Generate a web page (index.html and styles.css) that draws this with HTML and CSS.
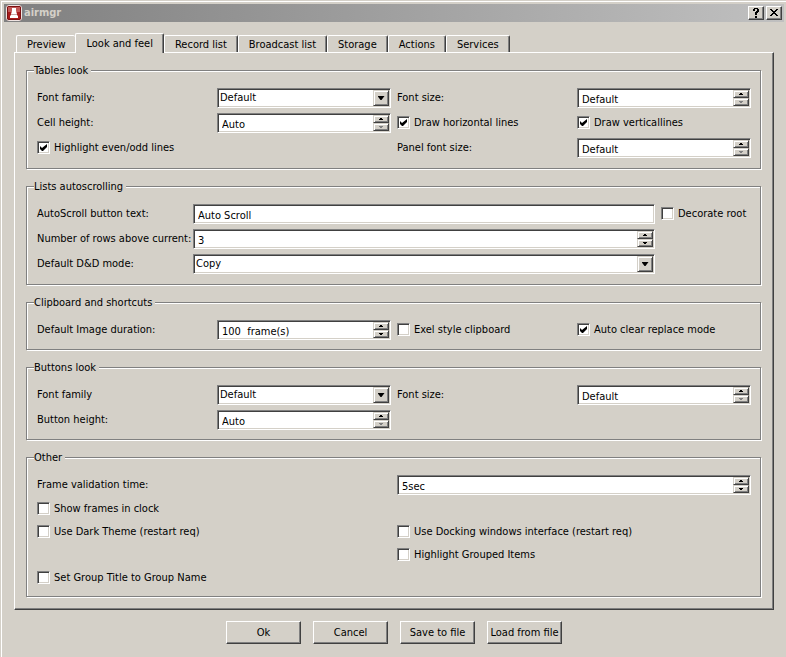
FILE: index.html
```html
<!DOCTYPE html>
<html lang="en">

<head>
    <meta charset="utf-8">
    <title>airmgr</title>
    <link rel="stylesheet" href="styles.css">
</head>

<body>
    <div class="window">
        <header class="titlebar">
            <svg class="app-icon" width="16" height="16" viewBox="0 0 16 16">
                <rect x="0.5" y="0.5" width="15" height="15" rx="2.5" fill="#a81c1c" stroke="#efe4e2"/>
                <rect x="1.5" y="1.5" width="13" height="13" rx="1.5" fill="none" stroke="#7c1010"/>
                <rect x="2" y="2" width="12" height="5" fill="#c25a58"/>
                <path d="M6 3h4v3l1 3v1l1 1v2H4v-2l1-1V9l1-3z" fill="#fff"/>
                <path d="M5 9.500h6" stroke="#c9a9a8"/>
            </svg>
            <h1>airmgr</h1>
            <button type="button" class="title-button" aria-label="Help">
                <svg width="8" height="10" viewBox="0 0 8 10"><path d="M1 1h1V0h4v1h1v3H6v1H5v2H3V4h1V3h1V1H3v2H1zM3 8h2v2H3z"/></svg>
            </button>
            <button type="button" class="title-button" aria-label="Close">
                <svg width="8" height="8" viewBox="0 0 8 8"><path d="M0 0h2v1h1v1h2V1h1V0h2v1H7v1H6v1H5v1h1v1h1v1h1v1H6V6H5V5H3v1H2v1H0V6h1V5h1V4h1V3H2V2H1V1H0z"/></svg>
            </button>
        </header>

        <main>
            <div class="tabs" role="tablist">
                <button type="button" role="tab">Preview</button>
                <button type="button" role="tab" class="active" aria-selected="true">Look and feel</button>
                <button type="button" role="tab">Record list</button>
                <button type="button" role="tab">Broadcast list</button>
                <button type="button" role="tab">Storage</button>
                <button type="button" role="tab">Actions</button>
                <button type="button" role="tab">Services</button>
            </div>

            <form class="pane" id="settings">
                <fieldset class="tall">
                    <legend>Tables look</legend>
                    <div class="grid four">
                        <label for="table-font">Font family:</label>
                        <div class="combo">
                            <select id="table-font"><option>Default</option></select>
                            <span class="arrow"></span>
                        </div>
                        <label for="table-size">Font size:</label>
                        <div class="spin">
                            <input type="text" id="table-size" value="Default">
                            <button type="button" class="up" aria-label="Up"></button>
                            <button type="button" class="down" aria-label="Down" disabled></button>
                        </div>
                        <label for="cell-height">Cell height:</label>
                        <div class="spin">
                            <input type="text" id="cell-height" value="Auto">
                            <button type="button" class="up" aria-label="Up"></button>
                            <button type="button" class="down" aria-label="Down" disabled></button>
                        </div>
                        <label class="check"><input type="checkbox" checked>Draw horizontal lines</label>
                        <label class="check"><input type="checkbox" checked>Draw verticallines</label>
                        <label class="check wide"><input type="checkbox" checked>Highlight even/odd lines</label>
                        <label for="panel-size">Panel font size:</label>
                        <div class="spin">
                            <input type="text" id="panel-size" value="Default">
                            <button type="button" class="up" aria-label="Up"></button>
                            <button type="button" class="down" aria-label="Down" disabled></button>
                        </div>
                    </div>
                </fieldset>

                <fieldset class="tall">
                    <legend>Lists autoscrolling</legend>
                    <div class="grid lists">
                        <label for="scroll-text">AutoScroll button text:</label>
                        <div class="edit"><input type="text" id="scroll-text" value="Auto Scroll"></div>
                        <label class="check"><input type="checkbox">Decorate root</label>
                        <label for="rows-above">Number of rows above current:</label>
                        <div class="spin">
                            <input type="text" id="rows-above" value="3">
                            <button type="button" class="up" aria-label="Up"></button>
                            <button type="button" class="down" aria-label="Down"></button>
                        </div>
                        <label class="first" for="dd-mode">Default D&amp;D mode:</label>
                        <div class="combo">
                            <select id="dd-mode"><option>Copy</option></select>
                            <span class="arrow"></span>
                        </div>
                    </div>
                </fieldset>

                <fieldset>
                    <legend>Clipboard and shortcuts</legend>
                    <div class="grid four">
                        <label for="duration">Default Image duration:</label>
                        <div class="spin">
                            <input type="text" id="duration" value="100  frame(s)">
                            <button type="button" class="up" aria-label="Up"></button>
                            <button type="button" class="down" aria-label="Down"></button>
                        </div>
                        <label class="check"><input type="checkbox">Exel style clipboard</label>
                        <label class="check"><input type="checkbox" checked>Auto clear replace mode</label>
                    </div>
                </fieldset>

                <fieldset>
                    <legend>Buttons look</legend>
                    <div class="grid four">
                        <label for="button-font">Font family</label>
                        <div class="combo">
                            <select id="button-font"><option>Default</option></select>
                            <span class="arrow"></span>
                        </div>
                        <label for="button-size">Font size:</label>
                        <div class="spin">
                            <input type="text" id="button-size" value="Default">
                            <button type="button" class="up" aria-label="Up"></button>
                            <button type="button" class="down" aria-label="Down" disabled></button>
                        </div>
                        <label for="button-height">Button height:</label>
                        <div class="spin">
                            <input type="text" id="button-height" value="Auto">
                            <button type="button" class="up" aria-label="Up"></button>
                            <button type="button" class="down" aria-label="Down" disabled></button>
                        </div>
                    </div>
                </fieldset>

                <fieldset>
                    <legend>Other</legend>
                    <div class="grid two">
                        <label for="validation">Frame validation time:</label>
                        <div class="spin">
                            <input type="text" id="validation" value="5sec">
                            <button type="button" class="up" aria-label="Up"></button>
                            <button type="button" class="down" aria-label="Down"></button>
                        </div>
                        <label class="check wide"><input type="checkbox">Show frames in clock</label>
                        <label class="check"><input type="checkbox">Use Dark Theme (restart req)</label>
                        <label class="check"><input type="checkbox">Use Docking windows interface (restart req)</label>
                        <label class="check second"><input type="checkbox">Highlight Grouped Items</label>
                        <label class="check wide"><input type="checkbox">Set Group Title to Group Name</label>
                    </div>
                </fieldset>
            </form>

            <footer class="actions">
                <button type="submit" form="settings">Ok</button>
                <button type="button">Cancel</button>
                <button type="button">Save to file</button>
                <button type="button">Load from file</button>
            </footer>
        </main>
    </div>
</body>

</html>
```
FILE: styles.css
```css
* {
    box-sizing: border-box;
}

body {
    margin: 0;
    background-color: #d4d0c8;
}

body,
button,
input,
select {
    font-family: Tahoma, "DejaVu Sans Condensed", sans-serif;
    font-size: 11px;
    line-height: 14px;
    color: #000;
}

button {
    padding: 0;
    background-color: #d4d0c8;
}

.window {
    min-height: calc(100vh - 1px);
    margin: 1px 0 0 1px;
    padding: 2px;
    border-top: 1px solid #fff;
    border-left: 1px solid #fff;
}

/* title bar */
.titlebar {
    display: flex;
    align-items: center;
    gap: 2px;
    height: 18px;
    padding: 0 2px;
    background: linear-gradient(to right, #808080, #c0c0c0);
}

.titlebar h1 {
    flex: 1;
    margin: 0;
    font-size: 11px;
    color: #d4d0c8;
}

.title-button {
    display: flex;
    justify-content: center;
    align-items: center;
    width: 16px;
    height: 14px;
    border: 1px solid;
    border-color: #fff #404040 #404040 #fff;
    box-shadow: inset -1px -1px #808080;
}

main {
    padding: 11px 10px 12px;
}

/* tabs */
.tabs {
    display: flex;
    align-items: flex-end;
    padding-left: 2px;
}

.tabs button {
    height: 17px;
    padding: 2px 10px 0;
    border: 0 solid #404040;
    border-top: 1px solid #fff;
    border-left: 1px solid #fff;
    border-right-width: 1px;
    border-radius: 2px 2px 0 0;
    box-shadow: inset -1px 0 #808080;
}

.tabs button.active {
    position: relative;
    height: 20px;
    padding: 0 10px;
    margin-bottom: -1px;
}

.tabs button:first-child {
    border-right: 0;
    box-shadow: none;
}

.pane {
    padding: 11px 11px 12px;
    border: 1px solid;
    border-color: #fff #404040 #404040 #fff;
    box-shadow: inset -1px -1px #808080;
}

/* groups */
fieldset {
    min-width: 0;
    margin: 0 1px 11px 0;
    padding: 11px 9px 9px 10px;
    border: 1px solid #808080;
    box-shadow: 1px 1px #fff, inset 1px 1px #fff;
}

fieldset.tall {
    padding-bottom: 10px;
}

fieldset:last-child {
    margin-bottom: 0;
}

legend {
    margin-left: -3px;
    padding: 0 3px 0 0;
    line-height: 13px;
    background-color: #d4d0c8;
}

.grid {
    display: grid;
    align-items: center;
    gap: 5px 6px;
    grid-auto-rows: 20px;
}

.four {
    grid-template-columns: repeat(4, 1fr);
}

.lists {
    grid-template-columns: 150px 1fr 90px;
}

.two {
    grid-template-columns: 1fr 1fr;
    grid-template-rows: 20px;
    grid-auto-rows: 18px;
}

.wide {
    grid-column: span 2;
}

.first {
    grid-column: 1;
}

.second {
    grid-column: 2;
}

label {
    white-space: nowrap;
}

/* check boxes */
.check {
    display: flex;
    align-items: flex-start;
    gap: 4px;
}

.check input {
    appearance: none;
    width: 13px;
    height: 13px;
    margin: 0;
    padding: 2px;
    border: 1px solid;
    border-color: #808080 #fff #fff #808080;
    background-color: #fff;
    box-shadow: inset 1px 1px #404040, inset -1px -1px #d4d0c8;
}

.check input:checked::before {
    content: "";
    display: block;
    width: 7px;
    height: 7px;
    background-color: #000;
    clip-path: polygon(0 2px, 2px 4px, 7px 0, 7px 3px, 3px 7px, 2px 7px, 0 5px);
}

/* sunken fields */
.edit,
.combo,
.spin {
    height: 20px;
    padding: 1px;
    border: 1px solid;
    border-color: #808080 #fff #fff #808080;
    background-color: #fff;
    box-shadow: inset 1px 1px #404040, inset -1px -1px #d4d0c8;
}

.edit input,
.spin input {
    width: 100%;
    min-width: 0;
    height: 16px;
    padding: 2px 3px 0;
    border: 0;
    background: none;
    outline: none;
}

.spin {
    display: grid;
    grid-template-columns: 1fr 16px;
    grid-template-rows: 8px 8px;
}

.spin input {
    grid-row: span 2;
}

.spin button,
.arrow {
    display: flex;
    justify-content: center;
    align-items: center;
    border: 1px solid;
    border-color: #d4d0c8 #404040 #404040 #d4d0c8;
    background-color: #d4d0c8;
    box-shadow: inset 1px 1px #fff, inset -1px -1px #808080;
}

.spin button::before,
.arrow::before {
    content: "";
    width: 4px;
    height: 2px;
    background-color: #000;
    clip-path: polygon(1px 0, 3px 0, 3px 1px, 4px 1px, 4px 2px, 0 2px, 0 1px, 1px 1px);
}

.spin .down {
    grid-column: 2;
}

.spin .down::before {
    clip-path: polygon(0 0, 4px 0, 4px 1px, 3px 1px, 3px 2px, 1px 2px, 1px 1px, 0 1px);
}

.spin button:disabled::before {
    background-color: #808080;
}

.combo {
    position: relative;
}

.combo select {
    display: block;
    appearance: none;
    width: 100%;
    height: 16px;
    padding: 0 18px 0 1px;
    border: 0;
    background: none;
    outline: none;
}

.arrow {
    position: absolute;
    top: 1px;
    right: 1px;
    width: 16px;
    height: 16px;
    pointer-events: none;
}

.arrow::before {
    width: 7px;
    height: 4px;
    clip-path: polygon(0 0, 7px 0, 4px 4px, 3px 4px);
}

/* bottom buttons */
.actions {
    display: flex;
    justify-content: center;
    gap: 12px;
    margin-top: 11px;
}

.actions button {
    width: 75px;
    height: 23px;
    border: 1px solid;
    border-color: #fff #404040 #404040 #fff;
    box-shadow: inset -1px -1px #808080;
    white-space: nowrap;
}
```
